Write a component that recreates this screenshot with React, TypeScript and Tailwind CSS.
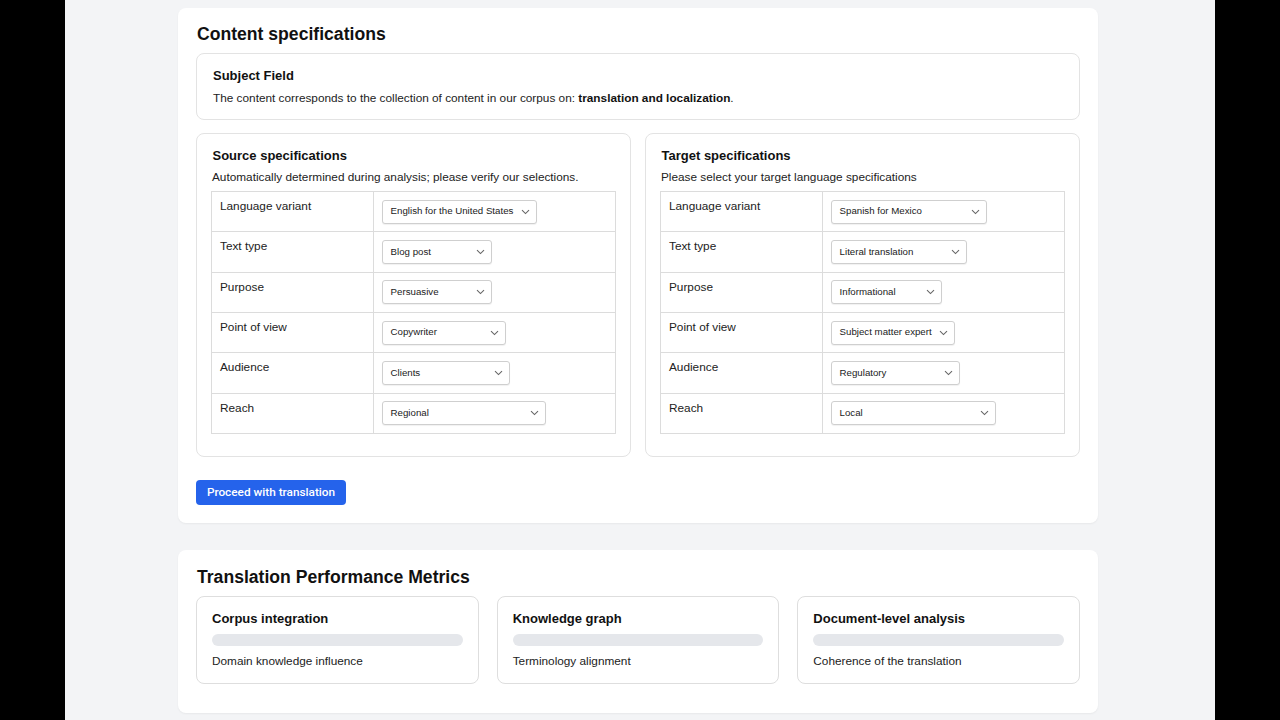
import React from "react";

type Row = { label: string; value: string; w: number };

const source: Row[] = [
  { label: "Language variant", value: "English for the United States", w: 155 },
  { label: "Text type", value: "Blog post", w: 110 },
  { label: "Purpose", value: "Persuasive", w: 110 },
  { label: "Point of view", value: "Copywriter", w: 124 },
  { label: "Audience", value: "Clients", w: 128 },
  { label: "Reach", value: "Regional", w: 164 },
];

const target: Row[] = [
  { label: "Language variant", value: "Spanish for Mexico", w: 156 },
  { label: "Text type", value: "Literal translation", w: 136 },
  { label: "Purpose", value: "Informational", w: 111 },
  { label: "Point of view", value: "Subject matter expert", w: 124 },
  { label: "Audience", value: "Regulatory", w: 129 },
  { label: "Reach", value: "Local", w: 165 },
];

function Select({ value, w }: { value: string; w: number }) {
  return (
    <div
      className="flex h-[24px] items-center justify-between rounded-[3px] border border-[#cfcfcf] bg-white pl-[8px] pr-[6px] shadow-[0_1px_1px_rgba(0,0,0,0.06)]"
      style={{ width: w }}
    >
      <span className="whitespace-nowrap text-[9.7px] text-[#1a1a1a]">{value}</span>
      <svg width="9" height="6" viewBox="0 0 9 6" className="ml-[4px] shrink-0">
        <path d="M1 1.2 L4.5 4.6 L8 1.2" fill="none" stroke="#666" strokeWidth="1.1" />
      </svg>
    </div>
  );
}

function SpecTable({ rows }: { rows: Row[] }) {
  return (
    <table className="w-full border-collapse border border-[#dcdcdc]">
      <tbody>
        {rows.map((r) => (
          <tr key={r.label} className="h-[40.35px]">
            <td className="w-[40%] border border-[#dcdcdc] px-[8px] pt-[6px] align-top text-[11.8px] leading-[16px] text-[#222]">
              {r.label}
            </td>
            <td className="border border-[#dcdcdc] px-[8px] py-[7px] align-middle">
              <Select value={r.value} w={r.w} />
            </td>
          </tr>
        ))}
      </tbody>
    </table>
  );
}

function SpecBox({ title, subtitle, rows }: { title: string; subtitle: string; rows: Row[] }) {
  return (
    <div className="flex-1 rounded-[8px] border border-[#e3e3e3] bg-white px-[14px] pt-[14px] pb-[22px]">
      <div className="pl-[1.5px] text-[13px] font-bold leading-[16px] text-[#111]">{title}</div>
      <div className="mt-[5px] mb-[6px] pl-[1px] text-[11.8px] leading-[16px] text-[#222]">{subtitle}</div>
      <SpecTable rows={rows} />
    </div>
  );
}

function Metric({ title, desc }: { title: string; desc: string }) {
  return (
    <div className="flex-1 rounded-[8px] border border-[#dedede] bg-white px-[15px] pt-[14px] pb-[14px]">
      <div className="text-[13px] font-bold leading-[16px] text-[#111]">{title}</div>
      <div className="mt-[7px] h-[12px] w-full rounded-full bg-[#e5e7eb]" />
      <div className="mt-[7px] text-[11.8px] leading-[16px] text-[#222]">{desc}</div>
    </div>
  );
}

export default function App() {
  return (
    <div
      className="flex min-h-screen w-full justify-center bg-black"
      style={{ fontFamily: '"Liberation Sans", Arial, sans-serif' }}
    >
      <div className="min-h-screen w-[1150px] bg-[#f3f4f6] pl-[113px] pt-[8px]">
        <div className="w-[920px] rounded-[8px] bg-white px-[18px] pt-[14px] pb-[18px] shadow-[0_1px_2px_rgba(0,0,0,0.05)]">
          <h1 className="pl-[1px] text-[17.6px] font-bold leading-[24px] text-[#111]">Content specifications</h1>
          <div className="mt-[7px] rounded-[8px] border border-[#e3e3e3] px-[16px] pt-[14px] pb-[13px]">
            <div className="text-[13px] font-bold leading-[16px] text-[#111]">Subject Field</div>
            <div className="mt-[6px] text-[11.8px] leading-[16px] text-[#222]">
              The content corresponds to the collection of content in our corpus on:{" "}
              <span className="font-bold text-[#111]">translation and localization</span>.
            </div>
          </div>
          <div className="mt-[13px] flex gap-[14px]">
            <SpecBox
              title="Source specifications"
              subtitle="Automatically determined during analysis; please verify our selections."
              rows={source}
            />
            <SpecBox
              title="Target specifications"
              subtitle="Please select your target language specifications"
              rows={target}
            />
          </div>
          <button
            className="mt-[23px] h-[25px] w-[150px] rounded-[4px] bg-[#2563eb] text-[11.8px] font-medium text-white"
            style={{ fontFamily: 'Roboto, "Liberation Sans", sans-serif' }}
          >
            Proceed with translation
          </button>
        </div>

        <div className="mt-[27px] w-[920px] rounded-[8px] bg-white px-[18px] pt-[15px] pb-[29px] shadow-[0_1px_2px_rgba(0,0,0,0.05)]">
          <h2 className="pl-[1px] text-[17.6px] font-bold leading-[24px] text-[#111]">Translation Performance Metrics</h2>
          <div className="mt-[7px] flex gap-[18px]">
            <Metric title="Corpus integration" desc="Domain knowledge influence" />
            <Metric title="Knowledge graph" desc="Terminology alignment" />
            <Metric title="Document-level analysis" desc="Coherence of the translation" />
          </div>
        </div>
      </div>
    </div>
  );
}
